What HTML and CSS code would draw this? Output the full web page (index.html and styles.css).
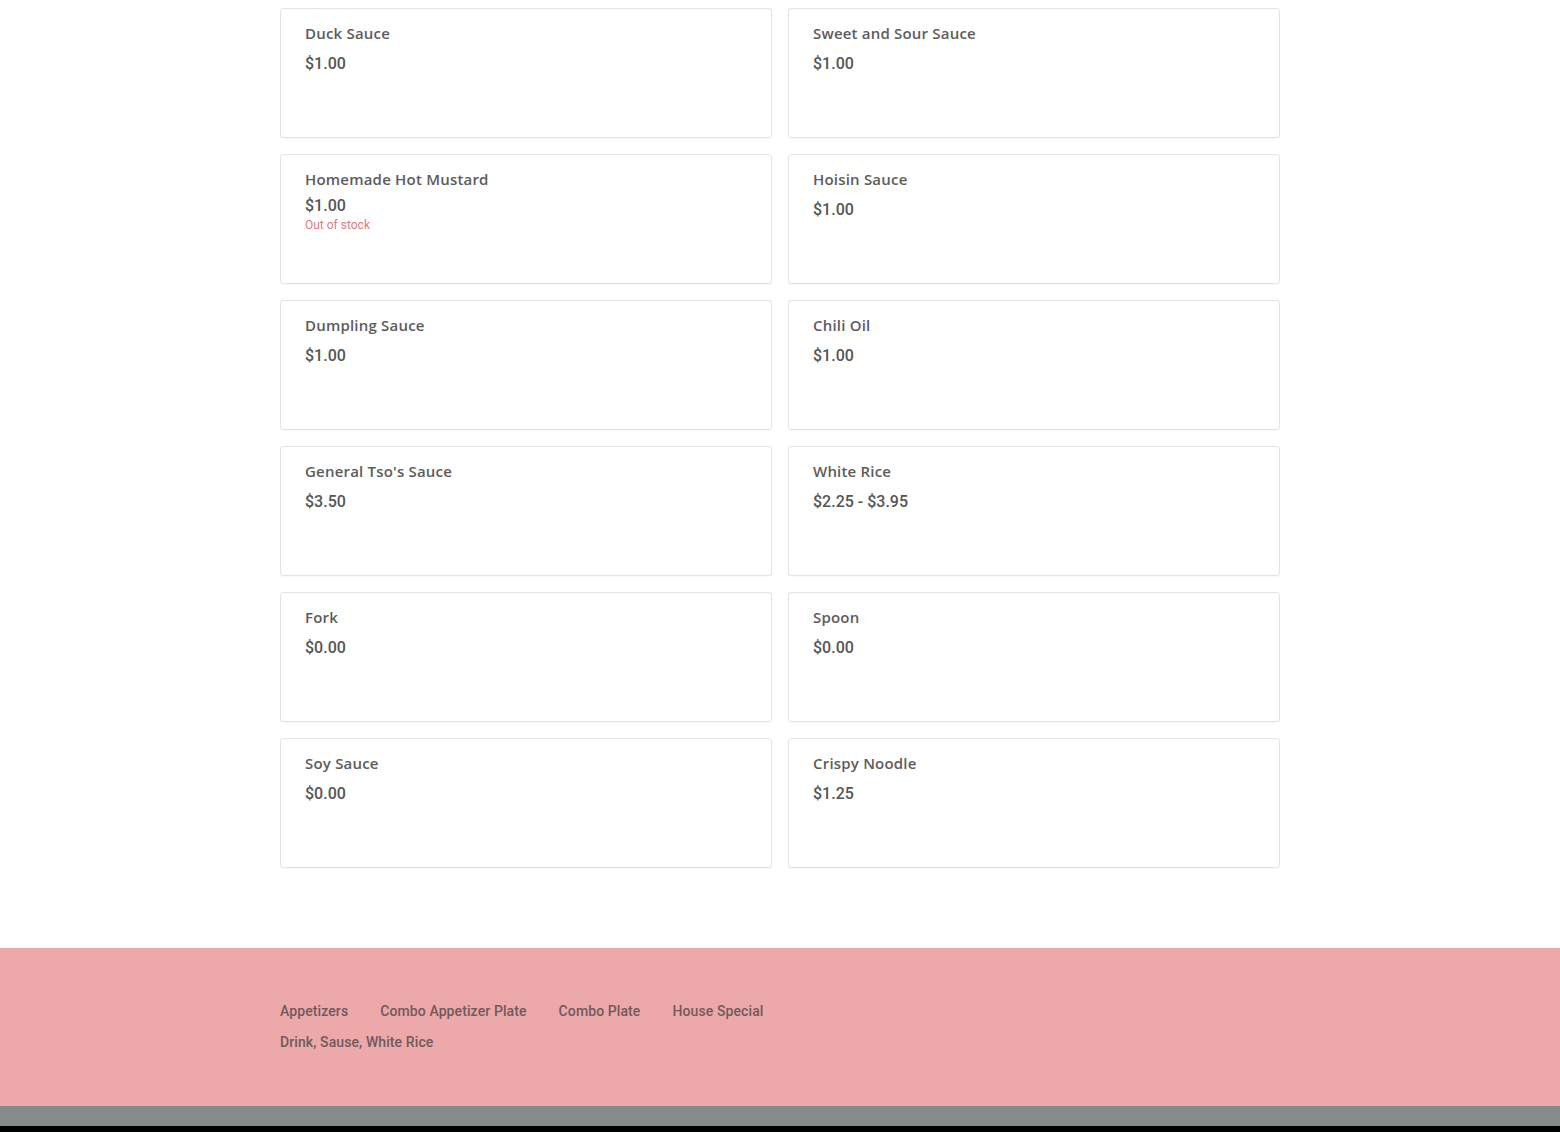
FILE: index.html
```html
<!DOCTYPE html>
<html lang="en">
<head>
<meta charset="UTF-8">
<title>Drink, Sause, White Rice</title>
<link rel="stylesheet" href="styles.css">
</head>
<body>
<div class="menu">
  <div class="grid">
    <div class="item"><div class="name">Duck Sauce</div><div class="price">$1.00</div></div>
    <div class="item"><div class="name">Sweet and Sour Sauce</div><div class="price">$1.00</div></div>
    <div class="item"><div class="name">Homemade Hot Mustard</div><div class="price tight">$1.00</div><div class="stock">Out of stock</div></div>
    <div class="item"><div class="name">Hoisin Sauce</div><div class="price">$1.00</div></div>
    <div class="item"><div class="name">Dumpling Sauce</div><div class="price">$1.00</div></div>
    <div class="item"><div class="name">Chili Oil</div><div class="price">$1.00</div></div>
    <div class="item"><div class="name">General Tso's Sauce</div><div class="price">$3.50</div></div>
    <div class="item"><div class="name">White Rice</div><div class="price">$2.25 - $3.95</div></div>
    <div class="item"><div class="name">Fork</div><div class="price">$0.00</div></div>
    <div class="item"><div class="name">Spoon</div><div class="price">$0.00</div></div>
    <div class="item"><div class="name">Soy Sauce</div><div class="price">$0.00</div></div>
    <div class="item"><div class="name">Crispy Noodle</div><div class="price">$1.25</div></div>
  </div>
</div>

<footer class="footer">
  <div class="footer-inner">
    <nav class="links">
      <a href="#">Appetizers</a>
      <a href="#">Combo Appetizer Plate</a>
      <a href="#">Combo Plate</a>
      <a href="#">House Special</a>
      <a href="#">Drink, Sause, White Rice</a>
    </nav>
  </div>
</footer>
<div class="bottom"></div>
<div class="edge"></div>
</body>
</html>
```

FILE: styles.css
```css
body { margin:0; background:#fff; font-family:Roboto, "Liberation Sans", sans-serif; color:#555; }
.menu { width:1000px; margin:0 auto; padding:8px 0 80px; }
.grid { display:grid; grid-template-columns:1fr 1fr; gap:16px; }
.item { height:130px; box-sizing:border-box; border:1px solid #e3e3e3; border-radius:3px; padding:14px 24px; box-shadow:0 1px 1px rgba(0,0,0,0.03); }
.name { font-family:"Open Sans", sans-serif; font-weight:600; font-size:15px; line-height:20px; color:#5c5c5c; letter-spacing:0.2px; }
.price { font-family:Roboto, sans-serif; font-weight:500; font-size:16px; line-height:20px; color:#555; margin-top:11px; }
.price.tight { margin-top:7px; }
.stock { font-size:12px; line-height:16px; color:#dd7b80; margin-top:1px; }
.footer { background:#eda8aa; height:158px; box-sizing:border-box; padding:54px 0 0; }
.footer-inner { width:1000px; margin:0 auto; }
.links { max-width:520px; display:flex; flex-wrap:wrap; column-gap:32px; row-gap:13px; }
.links a { font-family:Roboto, sans-serif; font-weight:500; font-size:14px; line-height:18px; color:#6f5a5d; text-decoration:none; letter-spacing:0.1px; }
.bottom { background:#858a8b; height:20px; }
.edge { background:#000; height:6px; }
```
